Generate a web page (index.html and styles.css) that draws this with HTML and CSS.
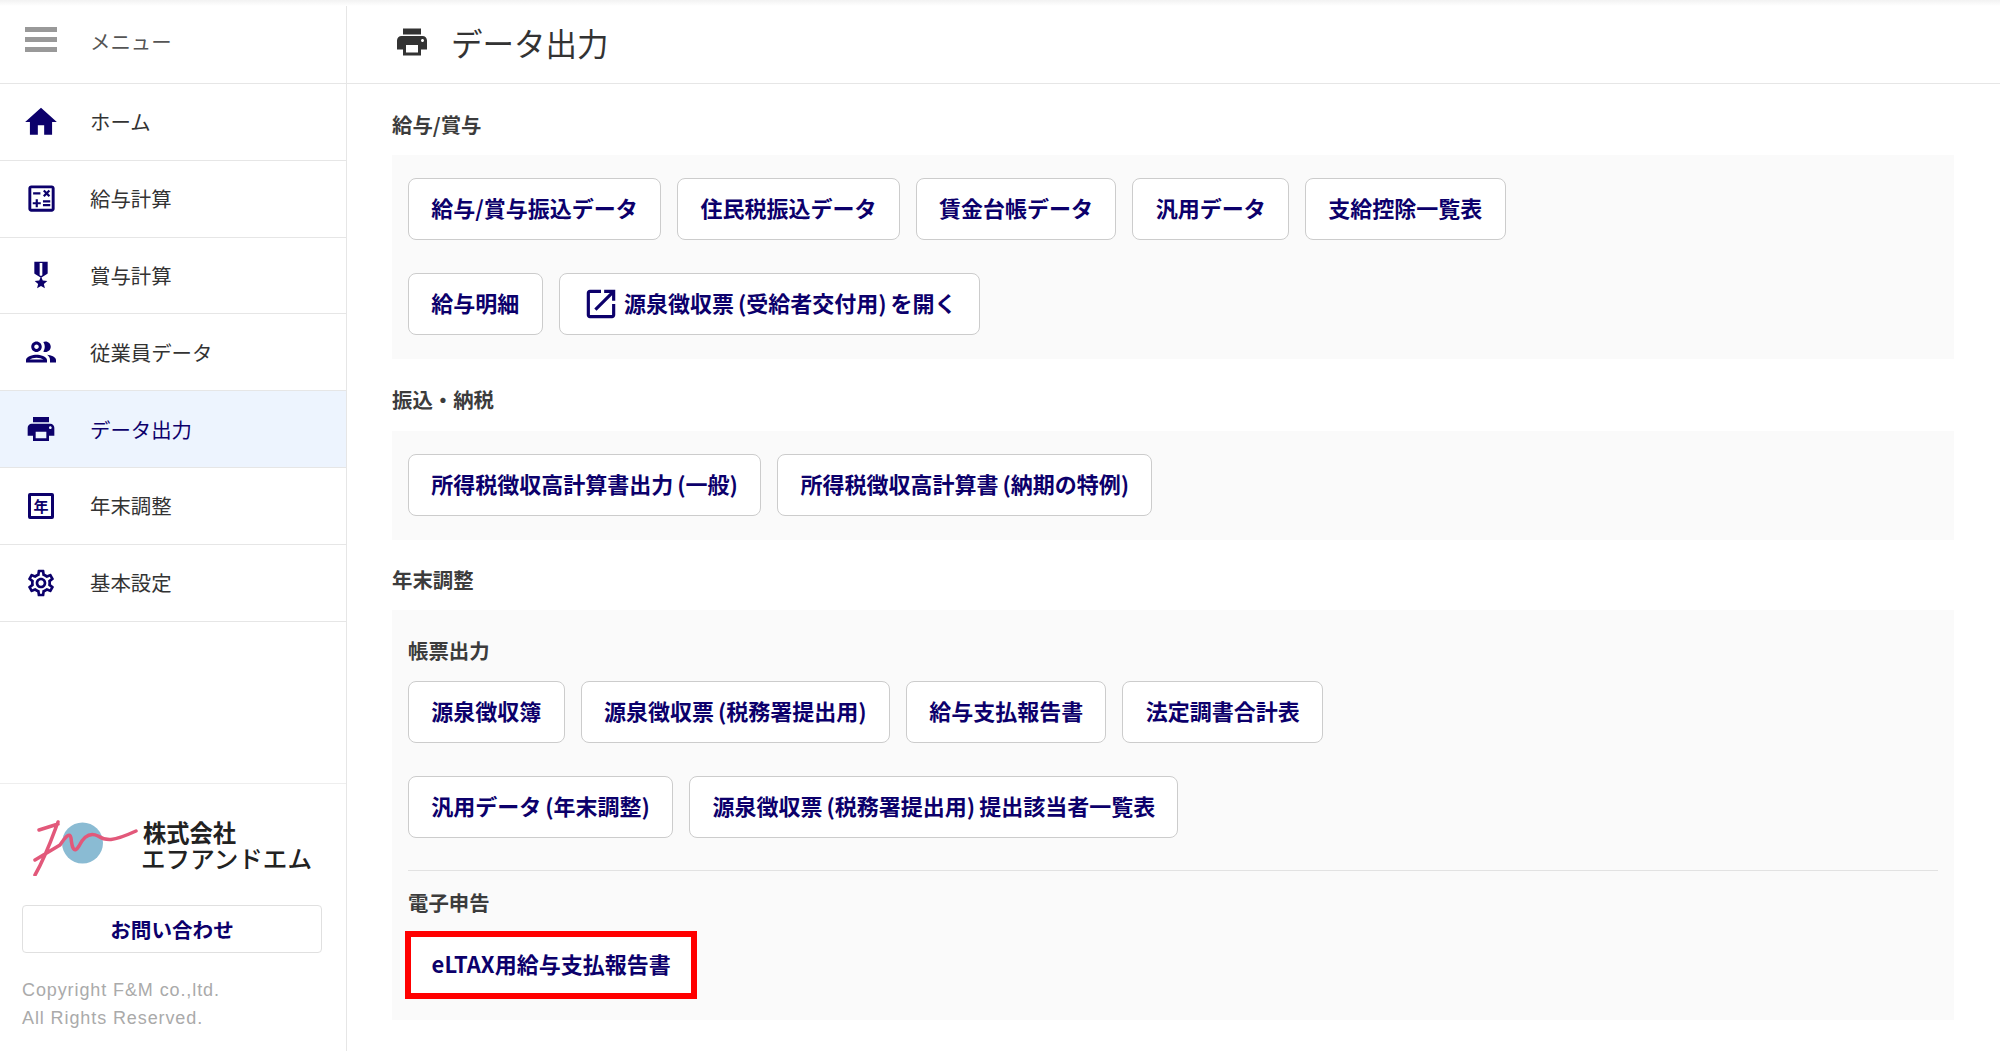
FILE: index.html
```html
<!DOCTYPE html>
<html lang="ja">
<head>
<meta charset="utf-8">
<title>データ出力</title>
<link rel="stylesheet" href="styles.css">
</head>
<body>
<div class="app">
  <aside class="sidebar">
    <nav class="nav">
      <div class="nav-item nav-menu">
        <span class="nav-icon"><span class="bars"><i></i><i></i><i></i></span></span>
        <span class="nav-text">メニュー</span>
      </div>
      <div class="nav-item">
        <span class="nav-icon"><svg class="ic-38" viewBox="0 0 24 24"><path d="M10 20v-6h4v6h5v-8h3L12 3 2 12h3v8z"/></svg></span>
        <span class="nav-text">ホーム</span>
      </div>
      <div class="nav-item">
        <span class="nav-icon"><svg class="ic-35" viewBox="0 0 24 24"><path d="M19 3H5c-1.1 0-2 .9-2 2v14c0 1.1.9 2 2 2h14c1.1 0 2-.9 2-2V5c0-1.1-.9-2-2-2zm0 16H5V5h14v14z"/><path d="M6.25 7.72h5v1.5h-5zM13 15.75h5v1.5h-5zM13 13.25h5v1.5h-5zM8 18h1.5v-2h2v-1.5h-2v-2H8v2H6V16h2zM14.09 10.95l1.41-1.41 1.41 1.41 1.06-1.06-1.41-1.42 1.41-1.41L16.91 6 15.5 7.41 14.09 6l-1.06 1.06 1.41 1.41-1.41 1.42z"/></svg></span>
        <span class="nav-text">給与計算</span>
      </div>
      <div class="nav-item">
        <span class="nav-icon"><svg class="ic-32" viewBox="0 0 24 24"><path d="M17 10.43V2H7v8.43c0 .35.18.68.49.86l4.18 2.51-.99 2.34-3.41.29 2.59 2.24L9.07 22 12 20.23 14.93 22l-.78-3.33 2.59-2.24-3.41-.29-.99-2.34 4.18-2.51c.3-.18.48-.5.48-.86zm-4 1.8l-1 .6-1-.6V3h2v9.23z"/></svg></span>
        <span class="nav-text">賞与計算</span>
      </div>
      <div class="nav-item">
        <span class="nav-icon"><svg class="ic-36" viewBox="0 0 24 24"><path d="M9 13.75c-2.34 0-7 1.17-7 3.5V19h14v-1.75c0-2.33-4.66-3.5-7-3.5zM4.34 17c.84-.58 2.87-1.25 4.66-1.25s3.82.67 4.66 1.25H4.34zM9 12c1.93 0 3.5-1.57 3.5-3.5S10.93 5 9 5 5.5 6.57 5.5 8.5 7.07 12 9 12zm0-5c.83 0 1.5.67 1.5 1.5S9.83 10 9 10s-1.5-.67-1.5-1.5S8.17 7 9 7zm7.04 6.81c1.16.84 1.96 1.96 1.96 3.44V19h4v-1.75c0-2.02-3.5-3.17-5.96-3.44zM15 12c1.93 0 3.5-1.57 3.5-3.5S16.93 5 15 5c-.54 0-1.04.13-1.5.35.63.89 1 1.98 1 3.15s-.37 2.26-1 3.15c.46.22.96.35 1.5.35z"/></svg></span>
        <span class="nav-text">従業員データ</span>
      </div>
      <div class="nav-item is-active">
        <span class="nav-icon"><svg class="ic-32" viewBox="0 0 24 24"><path d="M19 8H5c-1.66 0-3 1.34-3 3v6h4v4h12v-4h4v-6c0-1.66-1.34-3-3-3zm-3 11H8v-5h8v5zm3-7c-.55 0-1-.45-1-1s.45-1 1-1 1 .45 1 1-.45 1-1 1zm-1-9H6v4h12V3z"/></svg></span>
        <span class="nav-text">データ出力</span>
      </div>
      <div class="nav-item">
        <span class="nav-icon"><span class="nen">年</span></span>
        <span class="nav-text">年末調整</span>
      </div>
      <div class="nav-item">
        <span class="nav-icon"><svg class="ic-32" viewBox="0 0 24 24"><path d="M19.43 12.98c.04-.32.07-.64.07-.98 0-.34-.03-.66-.07-.98l2.11-1.65c.19-.15.24-.42.12-.64l-2-3.46c-.09-.16-.26-.25-.44-.25-.06 0-.12.01-.17.03l-2.49 1c-.52-.4-1.08-.73-1.69-.98l-.38-2.65C14.46 2.18 14.25 2 14 2h-4c-.25 0-.46.18-.49.42l-.38 2.65c-.61.25-1.17.59-1.69.98l-2.49-1c-.06-.02-.12-.03-.18-.03-.17 0-.34.09-.43.25l-2 3.46c-.13.22-.07.49.12.64l2.11 1.65c-.04.32-.07.65-.07.98 0 .33.03.66.07.98l-2.11 1.65c-.19.15-.24.42-.12.64l2 3.46c.09.16.26.25.44.25.06 0 .12-.01.17-.03l2.49-1c.52.4 1.08.73 1.69.98l.38 2.65c.03.24.24.42.49.42h4c.25 0 .46-.18.49-.42l.38-2.65c.61-.25 1.17-.59 1.69-.98l2.49 1c.06.02.12.03.18.03.17 0 .34-.09.43-.25l2-3.46c.12-.22.07-.49-.12-.64l-2.11-1.65zm-1.98-1.71c.04.31.05.52.05.73 0 .21-.02.43-.05.73l-.14 1.13.89.7 1.08.84-.7 1.21-1.27-.51-1.04-.42-.9.68c-.43.32-.84.56-1.25.73l-1.06.43-.16 1.13-.2 1.35h-1.4l-.19-1.35-.16-1.13-1.06-.43c-.43-.18-.83-.41-1.23-.71l-.91-.7-1.06.43-1.27.51-.7-1.21 1.08-.84.89-.7-.14-1.13c-.03-.31-.05-.54-.05-.74s.02-.43.05-.73l.14-1.13-.89-.7-1.08-.84.7-1.21 1.27.51 1.04.42.9-.68c.43-.32.84-.56 1.25-.73l1.06-.43.16-1.13.2-1.35h1.39l.19 1.35.16 1.13 1.06.43c.43.18.83.41 1.23.71l.91.7 1.06-.43 1.27-.51.7 1.21-1.07.85-.89.7.14 1.13zM12 8c-2.21 0-4 1.79-4 4s1.79 4 4 4 4-1.79 4-4-1.79-4-4-4zm0 6c-1.1 0-2-.9-2-2s.9-2 2-2 2 .9 2 2-.9 2-2 2z"/></svg></span>
        <span class="nav-text">基本設定</span>
      </div>
    </nav>
    <div class="side-foot">
      <svg class="logo" viewBox="22 40 300 66">
        <circle cx="82.5" cy="73" r="20.5" fill="#8abbd3"/>
        <path d="M39 60 L58 54 M58 52 C52 68 46 86 35 105 M35 90 L60 75 C66 66 70 62 71 68 C72 78 74 84 79 76 C84 66 90 62 98 66 C106 71 112 72 136 61" fill="none" stroke="#e2587a" stroke-width="3.5" stroke-linecap="round" stroke-linejoin="round"/>
        <text class="logo-top" x="143" y="72" textLength="93" lengthAdjust="spacingAndGlyphs">株式会社</text>
        <text class="logo-bot" x="141" y="98" textLength="171" lengthAdjust="spacingAndGlyphs">エフアンドエム</text>
      </svg>
      <div class="contact">お問い合わせ</div>
      <p class="copy">Copyright F&amp;M co.,ltd.<br>All Rights Reserved.</p>
    </div>
  </aside>
  <main class="main">
    <header class="head">
      <svg class="head-icon" viewBox="0 0 24 24"><path d="M19 8H5c-1.66 0-3 1.34-3 3v6h4v4h12v-4h4v-6c0-1.66-1.34-3-3-3zm-3 11H8v-5h8v5zm3-7c-.55 0-1-.45-1-1s.45-1 1-1 1 .45 1 1-.45 1-1 1zm-1-9H6v4h12V3z"/></svg>
      <h1 class="head-title">データ出力</h1>
    </header>
    <div class="content">
      <section class="section">
        <h2 class="label">給与/賞与</h2>
        <div class="panel">
          <div class="row">
            <a class="btn">給与/賞与振込データ</a>
            <a class="btn">住民税振込データ</a>
            <a class="btn">賃金台帳データ</a>
            <a class="btn">汎用データ</a>
            <a class="btn">支給控除一覧表</a>
          </div>
          <div class="row">
            <a class="btn">給与明細</a>
            <a class="btn"><svg class="btn-icon" viewBox="0 0 24 24"><path d="M19 19H5V5h7V3H5c-1.11 0-2 .9-2 2v14c0 1.1.89 2 2 2h14c1.1 0 2-.9 2-2v-7h-2v7zM14 3v2h3.59l-9.83 9.83 1.41 1.41L19 6.41V10h2V3h-7z"/></svg>源泉徴収票 (受給者交付用) を開く</a>
          </div>
        </div>
      </section>
      <section class="section section-tax">
        <h2 class="label">振込・納税</h2>
        <div class="panel">
          <div class="row">
            <a class="btn">所得税徴収高計算書出力 (一般)</a>
            <a class="btn">所得税徴収高計算書 (納期の特例)</a>
          </div>
        </div>
      </section>
      <section class="section">
        <h2 class="label">年末調整</h2>
        <div class="panel panel-sub">
          <h3 class="label">帳票出力</h3>
          <div class="row">
            <a class="btn">源泉徴収簿</a>
            <a class="btn">源泉徴収票 (税務署提出用)</a>
            <a class="btn">給与支払報告書</a>
            <a class="btn">法定調書合計表</a>
          </div>
          <div class="row">
            <a class="btn">汎用データ (年末調整)</a>
            <a class="btn">源泉徴収票 (税務署提出用) 提出該当者一覧表</a>
          </div>
          <hr class="rule">
          <h3 class="label">電子申告</h3>
          <div class="row">
            <a class="btn btn-marked">eLTAX用給与支払報告書</a>
          </div>
        </div>
      </section>
    </div>
  </main>
</div>
</body>
</html>
```
FILE: styles.css
```css
* { box-sizing: border-box; }
html, body { height: 100%; }
body {
  margin: 0;
  background: #fff;
  color: #333;
  font-family: "Noto Sans CJK JP", "Noto Sans", sans-serif;
  overflow: hidden;
  position: relative;
}
body::before {
  content: "";
  position: absolute;
  left: 0;
  right: 0;
  top: 0;
  height: 6px;
  background: linear-gradient(#f2f2f2, #fff);
}
.app { display: flex; height: 100vh; }

.sidebar {
  width: 347px;
  flex: none;
  display: flex;
  flex-direction: column;
  border-right: 1px solid #e6e6e6;
}
.nav { display: flex; flex-direction: column; }
.nav-item {
  height: 76.8px;
  display: flex;
  align-items: center;
  border-bottom: 1px solid #e6e6e6;
  font-size: 20.4px;
}
.nav-menu { height: 84px; }
.nav-menu .nav-text { color: #555; }
.nav-menu .nav-icon { margin-top: -4px; }
.nav-icon {
  width: 90px;
  padding-right: 8px;
  flex: none;
  display: flex;
  justify-content: center;
  align-items: center;
  fill: #0c006b;
}
.nav-text { line-height: 30px; margin-bottom: 1px; }
.is-active { background: #edf4fe; color: #0c006b; }
.ic-32 { width: 32px; height: 32px; }
.ic-35 { width: 35px; height: 35px; }
.ic-36 { width: 36px; height: 36px; }
.ic-38 { width: 38px; height: 38px; }
.bars { display: flex; flex-direction: column; gap: 5px; width: 32px; }
.bars i { display: block; height: 5px; background: #999; }
.nen {
  width: 26px;
  height: 26px;
  border: 3px solid #0c006b;
  border-radius: 2px;
  color: #0c006b;
  font-size: 15px;
  font-weight: 700;
  line-height: 20px;
  text-align: center;
}

.side-foot {
  margin-top: auto;
  height: 268px;
  border-top: 1px solid #eee;
  padding: 26px 22px 0;
}
.logo { display: block; width: 300px; height: 66px; margin-bottom: 29px; }
.logo-top { font-size: 24px; font-weight: 700; fill: #222; }
.logo-bot { font-size: 24px; font-weight: 500; fill: #222; }
.contact {
  width: 300px;
  height: 48px;
  border: 1px solid #e0e0e0;
  border-radius: 4px;
  color: #0c006b;
  font-size: 20.6px;
  font-weight: 700;
  line-height: 46px;
  text-align: center;
}
.copy {
  margin: 23px 0 0;
  color: #aaa;
  font-family: "Liberation Sans", sans-serif;
  font-size: 18px;
  letter-spacing: 0.9px;
  line-height: 28px;
}

.main { flex: 1; min-width: 0; display: flex; flex-direction: column; }
.head {
  height: 84px;
  flex: none;
  display: flex;
  align-items: center;
  gap: 21px;
  padding-left: 45px;
  border-bottom: 1px solid #e6e6e6;
}
.head-icon { width: 36px; height: 36px; fill: #333; margin-left: 2px; }
.head-title { margin: 0; font-size: 31.5px; font-weight: 400; line-height: 40px; color: #333; }
.content { padding: 26px 46px 0 45px; }
.section { margin-bottom: 26px; }
.section-tax { margin-bottom: 25px; }
.section-tax .label { margin-bottom: 16px; }
.label { margin: 0 0 15px; height: 30px; font-size: 20.4px; font-weight: 700; line-height: 28px; color: #3c3c3c; }
.panel {
  background: #fafafa;
  padding: 23px 16px 24px;
  display: flex;
  flex-direction: column;
  gap: 33px;
}
.panel-sub { padding-top: 26px; gap: 0; }
.panel-sub .row + .row { margin-top: 32.5px; }
.row { display: flex; gap: 16px; }
.btn {
  height: 62px;
  display: flex;
  align-items: center;
  padding: 0 22.3px 4px;
  background: #fff;
  border: 1px solid #ccc;
  border-radius: 8px;
  color: #0c006b;
  font-size: 22px;
  font-weight: 700;
  white-space: nowrap;
  word-spacing: -1px;
}
.btn-icon { width: 38px; height: 38px; fill: #0c006b; margin-right: 4px; margin-top: 4px; }
.btn-marked {
  border: 0;
  border-radius: 0;
  padding: 0 23.6px 4px;
  outline: 6px solid #f00;
  outline-offset: -3px;
  margin-top: 1px;
}
.rule { width: 100%; margin: 32.5px 0 17px; border: 0; border-top: 1px solid #e2e2e2; }
```
